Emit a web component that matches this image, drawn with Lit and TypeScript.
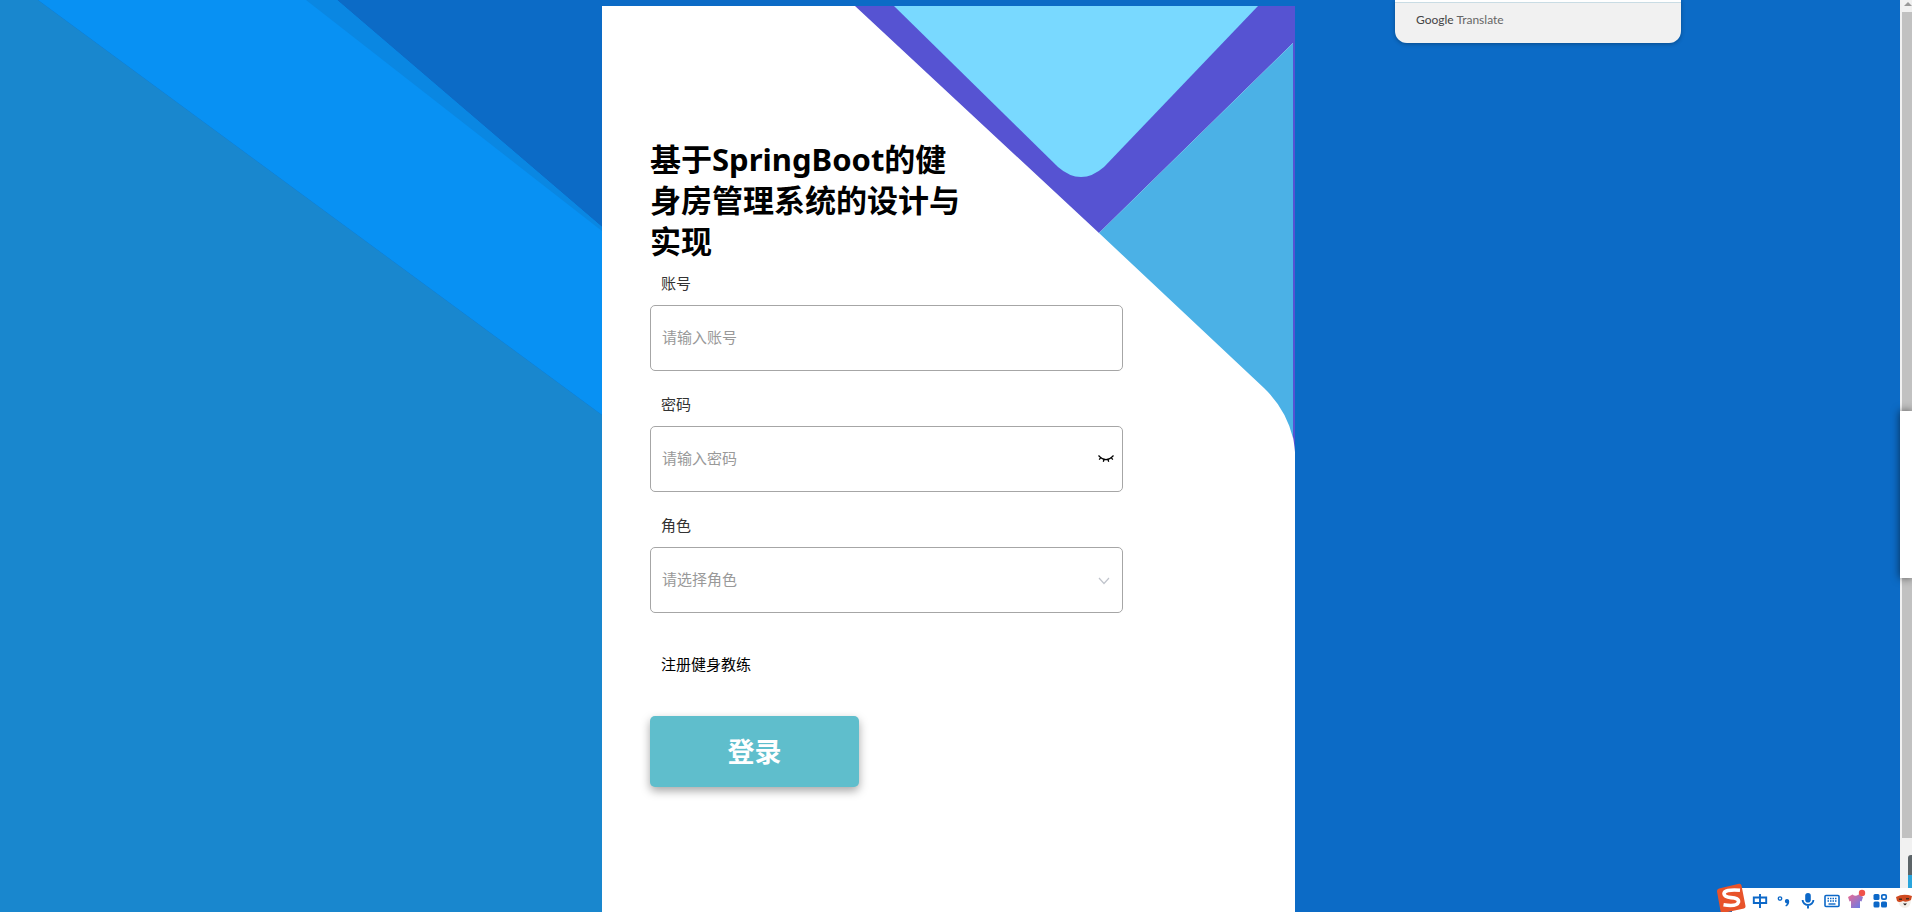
import { LitElement, html, css, svg } from "lit";
import { customElement, state } from "lit/decorators.js";

const cjk = css`"Noto Sans", "Noto Sans CJK SC", sans-serif`;

@customElement("login-form")
class LoginForm extends LitElement {
  @state() private reveal = false;

  static styles = css`
    :host {
      display: block;
      font-family: ${cjk};
    }
    .form {
      display: flex;
      flex-direction: column;
      align-items: flex-start;
    }
    .title {
      margin: 0;
      max-width: 320px;
      font-size: 31px;
      line-height: 41px;
      font-weight: 700;
      color: #000;
    }
    .field {
      display: flex;
      flex-direction: column;
      width: 100%;
      margin-bottom: 12px;
    }
    .label {
      padding: 0 11px;
      font-size: 15px;
      line-height: 43px;
      color: #333;
    }
    .box {
      display: flex;
      align-items: center;
      height: 66px;
      box-sizing: border-box;
      padding: 0 8px 0 0;
      border: 1px solid #a6a6a6;
      border-radius: 5px;
      background: #fff;
    }
    .control {
      flex: 1;
      min-width: 0;
      height: 100%;
      padding: 0 0 2px 11px;
      border: 0;
      outline: 0;
      background: transparent;
      appearance: none;
      font: 15px ${cjk};
      color: #999;
    }
    .control::placeholder {
      color: #999;
      opacity: 1;
    }
    .eye {
      display: flex;
      padding: 0;
      border: 0;
      background: none;
      cursor: pointer;
    }
    .chevron {
      margin-right: 4px;
      pointer-events: none;
    }
    .link {
      margin: 18px 11px 0;
      font-size: 15px;
      line-height: 43px;
      color: #000;
      text-decoration: none;
    }
    .submit {
      width: 209px;
      height: 71px;
      margin-top: 30px;
      padding: 0 0 2px;
      border: 0;
      border-radius: 5px;
      background: #5fbecc;
      box-shadow: 0 4px 10px rgba(0, 0, 0, 0.35);
      color: #fff;
      font: 700 27px ${cjk};
      cursor: pointer;
    }
  `;

  render() {
    return html`
      <form class="form" @submit=${(e: Event) => e.preventDefault()}>
        <h1 class="title">基于SpringBoot的健身房管理系统的设计与实现</h1>
        <div class="field">
          <label class="label" for="account">账号</label>
          <div class="box">
            <input class="control" id="account" type="text" placeholder="请输入账号" />
          </div>
        </div>
        <div class="field">
          <label class="label" for="password">密码</label>
          <div class="box">
            <input
              class="control"
              id="password"
              type=${this.reveal ? "text" : "password"}
              placeholder="请输入密码"
            />
            <button class="eye" type="button" @click=${() => (this.reveal = !this.reveal)}>
              <svg width="16" height="16" viewBox="0 0 16 16" fill="none" stroke="#000" stroke-width="1.3">
                <path d="M0.500 4.500Q8 12.600 15.500 4.500M2.800 6.600L1.200 8.600M6 8.500L5.300 10.700M10 8.500L10.700 10.700M13.200 6.600L14.800 8.600" />
              </svg>
            </button>
          </div>
        </div>
        <div class="field">
          <label class="label" for="role">角色</label>
          <div class="box">
            <select class="control" id="role">
              <option>请选择角色</option>
            </select>
            <svg class="chevron" width="12" height="12" viewBox="0 0 12 12" fill="none" stroke="#c0c4cc" stroke-width="1.2">
              <path d="M1 4L6 9.500L11 4" />
            </svg>
          </div>
        </div>
        <a class="link" href="#register">注册健身教练</a>
        <button class="submit" type="submit">登录</button>
      </form>
    `;
  }
}

@customElement("ime-bar")
class ImeBar extends LitElement {
  static styles = css`
    :host {
      display: flex;
      align-items: flex-end;
    }
    .logo {
      margin-right: -14px;
      z-index: 1;
    }
    .tools {
      display: flex;
      align-items: center;
      gap: 8px;
      height: 24px;
      box-sizing: border-box;
      padding: 2px 0 0 20px;
      background: #fff;
    }
    .tools svg {
      display: block;
    }
  `;

  render() {
    const icons = [
      svg`<path d="M1.800 4.500h12.400v5.500H1.800zM8 1v14" fill="none" stroke="#0c68c8" stroke-width="1.900"/>`,
      svg`<circle cx="4" cy="5.500" r="1.700" fill="none" stroke="#0c68c8" stroke-width="1.300"/><path d="M8.800 8a2.200 2.200 0 1 1 4.400 .5q0 3.500-3.200 5l-.7-1.100q1.600-.9 1.500-2.200Q8.800 10.200 8.800 8" fill="#0c68c8"/>`,
      svg`<rect x="5.200" y="0" width="5.600" height="9.500" rx="2.800" fill="#0c68c8"/><path d="M2.600 7a5.400 5 0 0 0 10.800 0M8 12v3.500" fill="none" stroke="#0c68c8" stroke-width="1.900"/>`,
      svg`<rect x="1" y="2.500" width="14" height="11" rx="1" fill="none" stroke="#0c68c8" stroke-width="1.600"/><path d="M3.500 5.500h9M3.500 8h9" stroke="#0c68c8" stroke-width="1.400" stroke-dasharray="1.500 1"/><path d="M4.500 11h7" stroke="#0c68c8" stroke-width="1.400"/>`,
      svg`<defs><linearGradient id="g" x1="0" y1="0" x2="1" y2="1"><stop offset="0" stop-color="#ee6a90"/><stop offset="1" stop-color="#5a7cf0"/></linearGradient></defs><path d="M0 4l4.500-2.500q3 2.500 6 0L15 4l-1.500 4.500-1.500-.5V15H3V8L1.500 8.500z" fill="url(#g)"/><circle cx="14" cy="0" r="3.200" fill="#f0524a"/>`,
      svg`<rect x="1.500" y="1" width="6" height="6" rx="1.500" fill="#0c68c8"/><rect x="1.500" y="8.500" width="6" height="6" rx="1.500" fill="#0c68c8"/><rect x="9" y="8.500" width="6" height="6" rx="1.500" fill="#0c68c8"/><rect x="9.800" y="1.800" width="4.400" height="4.400" rx="1.200" fill="none" stroke="#0c68c8" stroke-width="1.700"/>`,
      svg`<path d="M2 7q1 8 7 8 6-1 6-8z" fill="#f4efe9"/><path d="M0 4q7-4 16-1l-1 4q-5 3-8 1-4 2-6 0z" fill="#cf4a20"/><path d="M3 5.500h3v1.500H3zM10 5h3v1.500h-3z" fill="#4a2a1c"/><path d="M7 10.500h4l-2 2z" fill="#1e1a18"/>`,
    ];
    return html`
      <svg class="logo" width="30" height="29" viewBox="0 0 30 29">
        <path d="M3 5.500L23 .8Q25 .5 25.500 2.500L29.500 23Q29.700 25 28 25.500L7 30Q5 30 4.500 28L1 8.500Q.8 6 3 5.500Z" fill="#e8532a" />
        <path d="M24 7.200Q8 6 8 10.800Q8.500 14.300 15 14.600Q23 15 22.500 19Q21 24 7.500 21.800" fill="none" stroke="#fff" stroke-width="3.600" />
      </svg>
      <div class="tools">
        ${icons.map((i) => html`<svg width="16" height="16" viewBox="0 0 16 16" overflow="visible">${i}</svg>`)}
      </div>
    `;
  }
}

@customElement("app-root")
class AppRoot extends LitElement {
  static styles = css`
    :host {
      display: block;
      position: relative;
      height: 100vh;
      overflow: hidden;
      background: #0c6bc6;
    }
    .backdrop {
      position: absolute;
      left: 0;
      top: 0;
    }
    .page {
      position: relative;
      display: flex;
      height: 100%;
    }
    .main {
      flex: 1;
      display: flex;
      justify-content: center;
      padding: 6px 3px 0 0;
    }
    .card {
      position: relative;
      width: 693px;
      background: #fff;
    }
    .corner {
      position: absolute;
      right: 0;
      top: 0;
    }
    .form {
      position: relative;
      padding: 133px 172px 0 48px;
    }
    .scroll {
      display: flex;
      flex-direction: column;
      width: 10px;
      padding: 0 0 74px 2px;
      background: #f1f1f1;
    }
    .arrow {
      height: 12px;
    }
    .thumb {
      flex: 1;
      background: #c1c1c1;
    }
    .translate {
      position: absolute;
      top: 0;
      right: 231px;
      width: 286px;
      height: 43px;
      box-sizing: border-box;
      padding: 2px 21px 0;
      border-radius: 0 0 12px 12px;
      background: linear-gradient(#fff 2px, #c9dce4 2px, #c9dce4 3px, #f1f1f1 3px);
      box-shadow: 0 1px 4px rgba(0, 0, 0, 0.3);
      font: 12px/36px Lato, sans-serif;
      color: #666;
    }
    .brand {
      color: #444;
    }
    .drawer {
      position: absolute;
      right: 0;
      top: 411px;
      width: 12px;
      height: 167px;
      background: #fff;
      box-shadow: 0 0 8px rgba(0, 0, 0, 0.6);
    }
    .peek {
      position: absolute;
      right: 0;
      bottom: 24px;
      width: 4px;
      height: 33px;
      border-radius: 3px 0 0 0;
      background: linear-gradient(#5c6468 20px, #2aa5dc 20px);
    }
    .ime {
      position: absolute;
      right: 0;
      bottom: 0;
    }
  `;

  render() {
    return html`
      <svg class="backdrop" width="602" height="912" viewBox="0 0 602 912">
        <defs>
          <linearGradient id="edge" gradientUnits="userSpaceOnUse" x1="312" y1="22" x2="334" y2="-2">
            <stop offset="0" stop-color="#0891f3" />
            <stop offset="1" stop-color="#0d7fd8" />
          </linearGradient>
        </defs>
        <path d="M0 0H38L602 415V912H0Z" fill="#1987ce" />
        <path d="M38 0H337L602 227V415Z" fill="#0891f3" />
        <path d="M306 0H337L602 227V231Z" fill="#0a87e2" />
      </svg>
      <div class="page">
        <main class="main">
          <section class="card">
            <svg class="corner" width="440" height="446" viewBox="0 0 440 446">
              <path d="M0 0H440V446Q439 436 438 431V37L244 227Z" fill="#5653d2" />
              <path d="M438 37L244 227L409 382Q431 403 438 432Z" fill="#4bb1e6" />
              <path d="M39 0L203 161Q226 181 249 161L403 0Z" fill="#79d9ff" />
            </svg>
            <login-form class="form"></login-form>
          </section>
        </main>
        <div class="scroll">
          <svg class="arrow" width="10" height="12" viewBox="0 0 10 12">
            <path d="M2 6L6 2L10 6Z" fill="#999" />
          </svg>
          <div class="thumb"></div>
        </div>
      </div>
      <div class="translate"><span class="brand">Google</span> Translate</div>
      <div class="drawer"></div>
      <div class="peek"></div>
      <ime-bar class="ime"></ime-bar>
    `;
  }
}
